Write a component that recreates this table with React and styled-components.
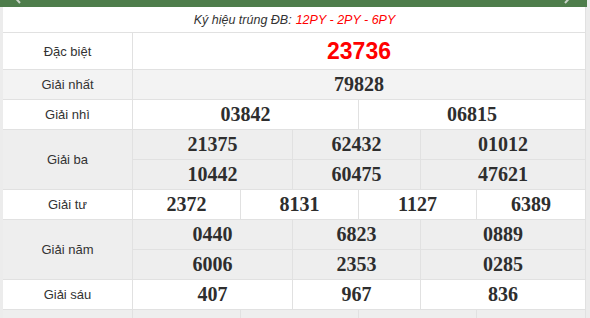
import React from "react";
import styled, { createGlobalStyle } from "styled-components";

const GlobalStyle = createGlobalStyle`
  html, body { margin: 0; padding: 0; background: #ececec; }
  body { font-family: "Liberation Sans", Arial, sans-serif; }
  * { box-sizing: border-box; }
`;

const BORDER = "#e1e1e1";

const Page = styled.div`
  width: 590px;
  height: 318px;
  overflow: hidden;
  display: flex;
  flex-direction: column;
`;

const TopBar = styled.div`
  flex: 0 0 7px;
  height: 7px;
  margin-right: 3px;
  background: #4e7d4b;
  display: flex;
  justify-content: space-between;
  align-items: flex-end;
  padding: 0 16px 0 14px;
  overflow: hidden;
`;

const Chevron = styled.svg`
  width: 7px;
  height: 12px;
  margin-bottom: 3px;
  display: block;
`;

const Table = styled.div`
  flex-shrink: 0;
  margin-left: 3px;
  width: 583px;
  background: #fff;
  border-right: 1px solid ${BORDER};
  display: flex;
  flex-direction: column;
`;

const Caption = styled.div`
  height: 26px;
  border-bottom: 1px solid ${BORDER};
  display: flex;
  align-items: center;
  justify-content: center;
  font-size: 12.5px;
  font-style: italic;
  color: #333;
  padding-left: 1px;
`;

const Codes = styled.span`
  color: #f00;
  margin-left: 4px;
`;

const Row = styled.div`
  display: grid;
  grid-template-columns: 129px 1fr;
  border-bottom: 1px solid ${BORDER};
  background: ${(p) => p.$bg || "#fff"};
`;

const Label = styled.div`
  display: flex;
  align-items: center;
  justify-content: center;
  font-size: 13px;
  color: #333;
`;

const Values = styled.div`
  display: flex;
  flex-direction: column;
`;

const Line = styled.div`
  display: grid;
  grid-template-columns: ${(p) => p.$cols};
  height: ${(p) => p.$h || 29}px;
  & + & {
    border-top: 1px solid ${BORDER};
    height: ${(p) => (p.$h || 29) + 1}px;
  }
`;

const Cell = styled.div`
  border-left: 1px solid ${BORDER};
  display: flex;
  align-items: center;
  justify-content: center;
  font-family: "Liberation Serif", "Times New Roman", serif;
  font-weight: bold;
  font-size: 20px;
  color: #2e2e2e;
`;

const Special = styled(Cell)`
  font-family: "Liberation Sans", Arial, sans-serif;
  font-size: 23px;
  color: #f00;
`;

const COLS = {
  one: "1fr",
  two: "226px 1fr",
  three: "160px 128px 1fr",
  four: "108px 118px 118px 1fr",
};

const prizes = [
  { label: "Giải nhất", bg: "#f3f3f3", cols: COLS.one, lines: [["79828"]] },
  { label: "Giải nhì", bg: "#fff", cols: COLS.two, lines: [["03842", "06815"]] },
  {
    label: "Giải ba",
    bg: "#eeeeee",
    cols: COLS.three,
    lines: [
      ["21375", "62432", "01012"],
      ["10442", "60475", "47621"],
    ],
  },
  { label: "Giải tư", bg: "#fff", cols: COLS.four, lines: [["2372", "8131", "1127", "6389"]] },
  {
    label: "Giải năm",
    bg: "#eeeeee",
    cols: COLS.three,
    lines: [
      ["0440", "6823", "0889"],
      ["6006", "2353", "0285"],
    ],
  },
  { label: "Giải sáu", bg: "#fff", cols: COLS.three, lines: [["407", "967", "836"]] },
  { label: "", bg: "#eeeeee", cols: COLS.four, lines: [["", "", "", ""]] },
];

const ChevronIcon = ({ dir }) => (
  <Chevron viewBox="0 0 7 12">
    <path
      d={dir === "left" ? "M6 1 L1.5 6 L6 11" : "M1 1 L5.5 6 L1 11"}
      fill="none"
      stroke="#c9d3c8"
      strokeWidth="2"
    />
  </Chevron>
);

export default function App() {
  return (
    <Page>
      <GlobalStyle />
      <TopBar>
        <ChevronIcon dir="left" />
        <ChevronIcon dir="right" />
      </TopBar>
      <Table>
        <Caption>
          Ký hiệu trúng ĐB:
          <Codes>12PY - 2PY - 6PY</Codes>
        </Caption>
        <Row>
          <Label>Đặc biệt</Label>
          <Values>
            <Line $cols={COLS.one} $h={36}>
              <Special>23736</Special>
            </Line>
          </Values>
        </Row>
        {prizes.map((p, k) => (
          <Row key={k} $bg={p.bg}>
            <Label>{p.label}</Label>
            <Values>
              {p.lines.map((line, i) => (
                <Line key={i} $cols={p.cols}>
                  {line.map((n, j) => (
                    <Cell key={j}>{n}</Cell>
                  ))}
                </Line>
              ))}
            </Values>
          </Row>
        ))}
      </Table>
    </Page>
  );
}
